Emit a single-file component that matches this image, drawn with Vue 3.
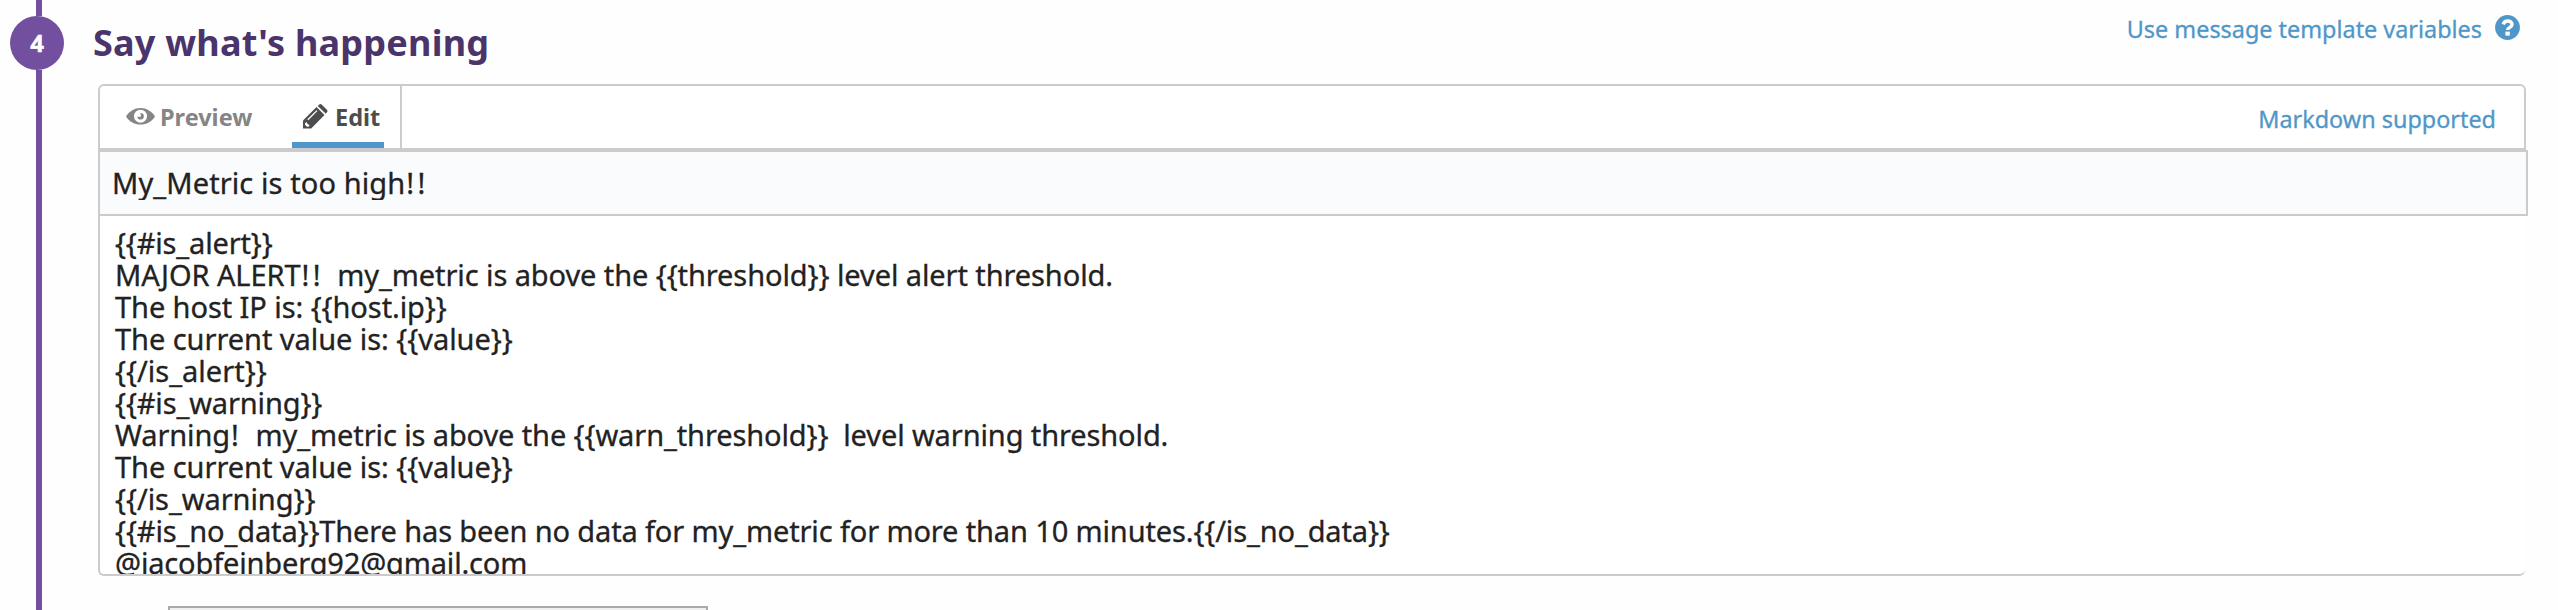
<script setup>
const title = 'My_Metric is too high!!'
const message = [
  { text: '{{#is_alert}}', spacing: -0.16 },
  { text: 'MAJOR ALERT!!  my_metric is above the {{threshold}} level alert threshold.', spacing: -0.09 },
  { text: 'The host IP is: {{host.ip}}', spacing: -0.08 },
  { text: 'The current value is: {{value}}', spacing: -0.05 },
  { text: '{{/is_alert}}', spacing: 0 },
  { text: '{{#is_warning}}', spacing: -0.14 },
  { text: 'Warning!  my_metric is above the {{warn_threshold}}  level warning threshold.', spacing: -0.11 },
  { text: 'The current value is: {{value}}', spacing: -0.05 },
  { text: '{{/is_warning}}', spacing: -0.06 },
  { text: '{{#is_no_data}}There has been no data for my_metric for more than 10 minutes.{{/is_no_data}}', spacing: -0.13 },
  { text: '@jacobfeinberg92@gmail.com', spacing: -0.16 },
]

// Exclamation marks are set with wider tracking than the rest of the text.
const split = (text) => text.split(/(!+)/).filter(Boolean)
const isBang = (part) => part[0] === '!'
</script>

<template>
  <section class="step">
    <aside class="rail">
      <span class="line top"></span>
      <span class="badge">4</span>
      <span class="line rest"></span>
    </aside>
    <main class="content">
      <header class="head">
        <h2>Say what's happening</h2>
        <a class="link help">
          <span>Use message template variables</span>
          <svg width="25" height="25" viewBox="0 0 25 25">
            <circle cx="12.5" cy="12.5" r="12.4" fill="#4f97c8" />
            <path d="M8.2 9.3C9 7.2 10.5 6.1 12.7 6.1c2.4 0 4.3 1.3 4.3 3.3 0 3-4.4 2.900-4.400 5.700" fill="none" stroke="#fff" stroke-width="3.500" />
            <rect x="10.400" y="16.600" width="4.400" height="4" fill="#fff" />
          </svg>
        </a>
      </header>
      <nav class="toolbar">
        <div class="tabs">
          <a class="tab preview">
            <svg width="29" height="17" viewBox="0 0 29 17">
              <path d="M0 8.500C3.500 3 8.600 0 14.500 0S25.500 3 29 8.500C25.500 14 20.400 16.500 14.500 16.500S3.500 14 0 8.500Z" fill="#858585" />
              <circle cx="14.500" cy="8.200" r="6.500" fill="#fff" />
              <path d="M14.500 5a3.300 3.300 0 1 1-3.200 3.800h2.700a.9.9 0 0 0 .9-.9Z" fill="#858585" />
            </svg>
            <span>Preview</span>
          </a>
          <a class="tab edit">
            <svg width="25" height="25" viewBox="0 0 25 25">
              <path d="M0 16.500 13.500 3 21.500 11 8.200 24.500H0Z" fill="#4d4d4d" />
              <path d="M14.800 1.900 16 .7q1.400-1.200 2.800 0L23.900 5.700q1.200 1.300 0 2.600L22.800 9.700Z" fill="#4d4d4d" />
              <path d="M4.800 15.800 14 6.600" stroke="#fff" stroke-width="1.300" />
              <path d="M2 19.200 3.400 18 4.600 20.100 6.700 21.300 5.400 22.700H4L2 20.700Z" fill="#fff" />
            </svg>
            <span>Edit</span>
          </a>
        </div>
        <a class="link markdown">Markdown supported</a>
      </nav>
      <div class="title">
        <div class="title-text"><span v-for="(part, i) in split(title)" :key="i" :class="{ bang: isBang(part) }">{{ part }}</span></div>
      </div>
      <div class="message">
        <div v-for="(line, i) in message" :key="i" class="row" :style="{ letterSpacing: line.spacing + 'px' }"><span v-for="(part, j) in split(line.text)" :key="j" :class="{ bang: isBang(part) }">{{ part }}</span></div>
      </div>
      <div class="select"></div>
    </main>
  </section>
</template>

<style>
body { margin: 0; background: #fefefe; overflow: hidden; }
</style>

<style scoped>
.step {
  display: flex;
  height: 610px;
  overflow: hidden;
  font-family: "Noto Sans", "Open Sans", sans-serif;
  color: #222;
}
.rail {
  width: 98px;
  flex: none;
  display: flex;
  flex-direction: column;
  align-items: flex-start;
}
.line { width: 6px; margin-left: 36px; background: #734f9f; }
.top { height: 16px; }
.rest { flex: 1; }
.badge {
  width: 54px;
  height: 54px;
  margin-left: 10px;
  border-radius: 50%;
  background: #734f9f;
  color: #fff;
  font-size: 24px;
  font-weight: 700;
  line-height: 54px;
  text-align: center;
  -webkit-text-stroke: 0.4px #fff;
}
.content { flex: 1; min-width: 0; }
.head {
  height: 84px;
  display: flex;
  justify-content: space-between;
  align-items: flex-start;
}
h2 {
  margin: 18px 0 0 -5px;
  font-size: 36px;
  line-height: 50px;
  font-weight: 700;
  letter-spacing: 0.23px;
  color: #4b336b;
  white-space: nowrap;
}
.link {
  color: #4f97c8;
  font-size: 23.4px;
  line-height: 34px;
  white-space: nowrap;
  -webkit-text-stroke: 0.3px #4f97c8;
}
.help { display: flex; margin: 12px 38px 0 0; }
.help svg { margin: 3px 0 0 13px; }
.toolbar {
  box-sizing: border-box;
  width: 2428px;
  height: 66px;
  border: 2px solid #cbcbcb;
  border-radius: 6px 6px 0 0;
  display: flex;
  justify-content: space-between;
  background: #fff;
}
.tabs {
  box-sizing: border-box;
  width: 302px;
  border-right: 2px solid #cbcbcb;
  display: flex;
}
.tab {
  box-sizing: border-box;
  height: 62px;
  display: flex;
  font-size: 23.5px;
  line-height: 34px;
  font-weight: 700;
  white-space: nowrap;
}
.tab span { margin-top: 14px; }
.preview { width: 166px; margin-left: 26px; color: #858585; }
.preview svg { margin: 22px 5px 0 0; }
.edit { width: 92px; color: #4d4d4d; border-bottom: 6px solid #4f97c8; padding-left: 11px; }
.edit svg { margin: 18px 7px 0 0; }
.markdown { margin: 16px 28px 0 0; }
.title {
  box-sizing: border-box;
  width: 2430px;
  height: 66px;
  border: 2px solid #cbcbcb;
  background: #fafbfd;
  padding: 14px 12px;
}
.title-text {
  height: 34px;
  line-height: 34px;
  overflow: hidden;
  font-size: 29px;
  letter-spacing: 0.1px;
  white-space: pre;
  -webkit-text-stroke: 0.3px #222;
}
.message {
  box-sizing: border-box;
  width: 2427px;
  height: 360px;
  border-left: 2px solid #cbcbcb;
  border-bottom: 2px solid #cbcbcb;
  border-radius: 0 0 6px 6px;
  padding: 11px 0 0 15px;
  overflow: hidden;
  background: #fff;
}
.row {
  height: 32px;
  line-height: 32px;
  font-size: 29px;
  white-space: pre;
  -webkit-text-stroke: 0.3px #222;
}
.bang { margin-left: 1px; letter-spacing: 3.4px; }
.row .bang { margin-right: -1.5px; }
.select {
  box-sizing: border-box;
  width: 540px;
  height: 60px;
  margin: 30px 0 0 70px;
  border: 2px solid #a9a9a9;
  background: #f0f0f0;
}
</style>
